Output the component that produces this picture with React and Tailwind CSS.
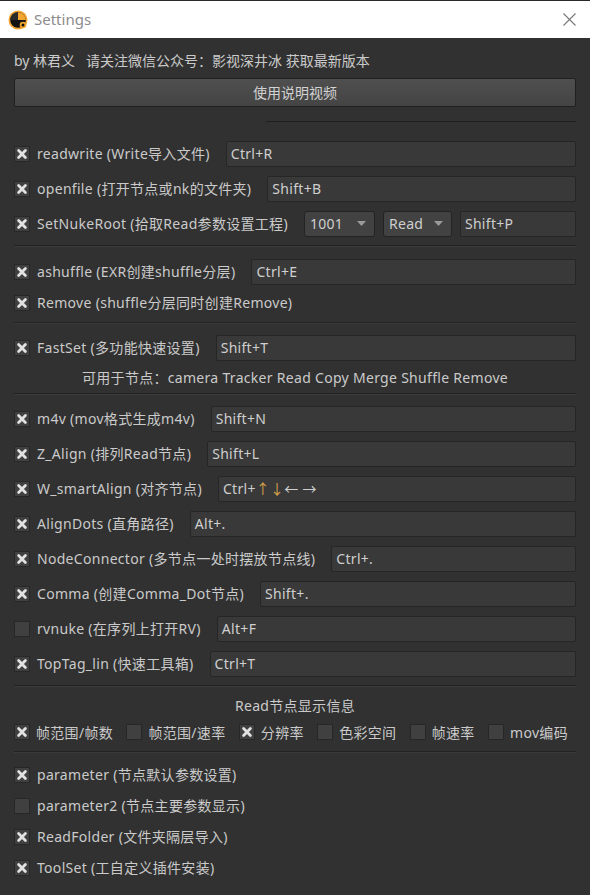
import { Fragment } from 'react';

const font = { fontFamily: '"Segoe UI", "Noto Sans", "Noto Sans CJK SC", sans-serif' };

function Check({ on }) {
  return (
    <span className="flex h-[16px] w-[16px] shrink-0 items-center justify-center border border-[#272727] bg-[#404040]">
      {on && (
        <svg width="12" height="12" viewBox="0 0 12 12">
          <path d="M2.6 2.6 L9.4 9.4 M9.4 2.6 L2.6 9.4" stroke="#e2e2e2" strokeWidth="2.8" strokeLinecap="round" />
        </svg>
      )}
    </span>
  );
}

function Field({ value, className = '' }) {
  return (
    <div className={`flex h-[26px] items-center rounded-[2px] border border-[#262626] bg-[#393939] pl-[4px] text-[14px] tracking-[0.3px] text-[#cfcfcf] ${className}`}>
      {value}
    </div>
  );
}

function Combo({ value, w }) {
  return (
    <div className={`flex h-[26px] ${w} items-center justify-between rounded-[3px] border border-[#232323] bg-[#424242] pl-[5px] pr-[8px] text-[14px] tracking-[0.3px] text-[#cfcfcf]`}>
      {value}
      <svg width="9" height="5" viewBox="0 0 9 5"><path d="M0 0 H9 L4.5 5 Z" fill="#9a9a9a" /></svg>
    </div>
  );
}

function Row({ on, label, keys, children }) {
  return (
    <div className="flex h-[35px] items-center gap-[7px]">
      <Check on={on} />
      <span className="whitespace-nowrap text-[14px] tracking-[0.3px]">{label}</span>
      {keys !== undefined && <Field value={keys} className="ml-[9px] flex-1" />}
      {children}
    </div>
  );
}

function Plain({ on, label, h = 'h-[31px]' }) {
  return (
    <div className={`flex ${h} items-center gap-[7px]`}>
      <Check on={on} />
      <span className="whitespace-nowrap text-[14px] tracking-[0.3px]">{label}</span>
    </div>
  );
}

// sunken separator: dark line with a faint highlight under it
const Rule = ({ className }) => <div className={`h-[2px] border-t border-b border-t-[#222] border-b-[#3a3a3a] ${className}`} />;

const shortcuts = [
  { on: true, label: 'm4v (mov格式生成m4v)', keys: 'Shift+N' },
  { on: true, label: 'Z_Align (排列Read节点)', keys: 'Shift+L' },
  {
    on: true,
    label: 'W_smartAlign (对齐节点)',
    keys: (
      <>Ctrl+<span className="text-[#d7a24a]">↑</span> <span className="text-[#d7a24a]">↓</span> ← →</>
    ),
  },
  { on: true, label: 'AlignDots (直角路径)', keys: 'Alt+.' },
  { on: true, label: 'NodeConnector (多节点一处时摆放节点线)', keys: 'Ctrl+.' },
  { on: true, label: 'Comma (创建Comma_Dot节点)', keys: 'Shift+.' },
  { on: false, label: 'rvnuke (在序列上打开RV)', keys: 'Alt+F' },
  { on: true, label: 'TopTag_lin (快速工具箱)', keys: 'Ctrl+T' },
];

const readInfo = [
  ['帧范围/帧数', true],
  ['帧范围/速率', false],
  ['分辨率', true],
  ['色彩空间', false],
  ['帧速率', false],
  ['mov编码', false],
];

export default function App() {
  return (
    <div className="h-[895px] w-[590px] overflow-hidden bg-[#313131] text-[#cacaca]" style={font}>
      {/* window title bar */}
      <div className="flex h-[38px] items-center border-t border-[#2a2a2a] bg-white pl-[8px] pr-[14px]">
        <svg width="20" height="20" viewBox="0 0 20 20">
          <circle cx="10" cy="10" r="9.5" fill="#f2a530" />
          <circle cx="10" cy="10" r="7.8" fill="#111" />
          <path d="M10 10 L10 2.2 A7.8 7.8 0 0 1 17.8 10 Z" fill="#f2a530" />
          <path d="M10 10 L2.2 10 A7.8 7.8 0 0 1 10 2.2 Z" fill="#2a2a2a" />
          <circle cx="15" cy="15" r="3.3" fill="#f2a530" />
          <circle cx="15" cy="15" r="1.5" fill="#111" />
        </svg>
        <span className="ml-[6px] text-[15px] text-[#8c8c8c]">Settings</span>
        <svg className="ml-auto" width="13" height="13" viewBox="0 0 13 13">
          <path d="M0.5 0.5 L12.5 12.5 M12.5 0.5 L0.5 12.5" stroke="#777" strokeWidth="1.1" />
        </svg>
      </div>

      <div className="px-[14px]">
        <div className="pt-[12px] text-[14px] leading-[22px]">by 林君义&nbsp;&nbsp;&nbsp;请关注微信公众号：影视深井冰 获取最新版本</div>
        <button className="mt-[6px] flex h-[29px] w-full items-center justify-center rounded-[2px] border border-[#202020] bg-gradient-to-b from-[#4f4f4f] to-[#444] text-[14px] text-[#d2d2d2]">
          使用说明视频
        </button>
        <div className="mt-[14px] ml-auto h-px w-[310px] bg-[#1f1f1f]" />

        <div className="pt-[14px]">
          <Row on label="readwrite (Write导入文件)" keys="Ctrl+R" />
          <Row on label="openfile (打开节点或nk的文件夹)" keys="Shift+B" />
          <Row on label="SetNukeRoot (拾取Read参数设置工程)">
            <div className="ml-[9px] flex flex-1 items-center gap-[8px]">
              <Combo value="1001" w="w-[71px]" />
              <Combo value="Read" w="w-[69px]" />
              <Field value="Shift+P" className="flex-1" />
            </div>
          </Row>
        </div>
        <Rule className="mt-[4px] mb-[7px]" />
        <Row on label="ashuffle (EXR创建shuffle分层)" keys="Ctrl+E" />
        <Plain on label="Remove (shuffle分层同时创建Remove)" h="h-[27px]" />
        <Rule className="mt-[6px] mb-[6px]" />
        <Row on label="FastSet (多功能快速设置)" keys="Shift+T" />
        <div className="flex h-[24px] items-center justify-center text-[14px] tracking-[0.3px]">可用于节点：camera Tracker Read Copy Merge Shuffle Remove</div>
        <Rule className="mt-[4px] mb-[6px]" />
        {shortcuts.map((s) => (
          <Row key={s.label} on={s.on} label={s.label} keys={s.keys} />
        ))}
        <Rule className="mt-[4px] mb-[6px]" />
        <div className="flex h-[24px] items-center justify-center text-[14px] tracking-[0.3px]">Read节点显示信息</div>
        <div className="flex h-[30px] items-center justify-between pr-[8px]">
          {readInfo.map(([label, on]) => (
            <Fragment key={label}>
              <div className="flex items-center gap-[6px]">
                <Check on={on} />
                <span className="text-[14px] tracking-[0.3px]">{label}</span>
              </div>
            </Fragment>
          ))}
        </div>
        <Rule className="mt-[4px] mb-[6px]" />
        <Plain on label="parameter (节点默认参数设置)" />
        <Plain on={false} label="parameter2 (节点主要参数显示)" />
        <Plain on label="ReadFolder (文件夹隔层导入)" />
        <Plain on label="ToolSet (工自定义插件安装)" />
      </div>
    </div>
  );
}
